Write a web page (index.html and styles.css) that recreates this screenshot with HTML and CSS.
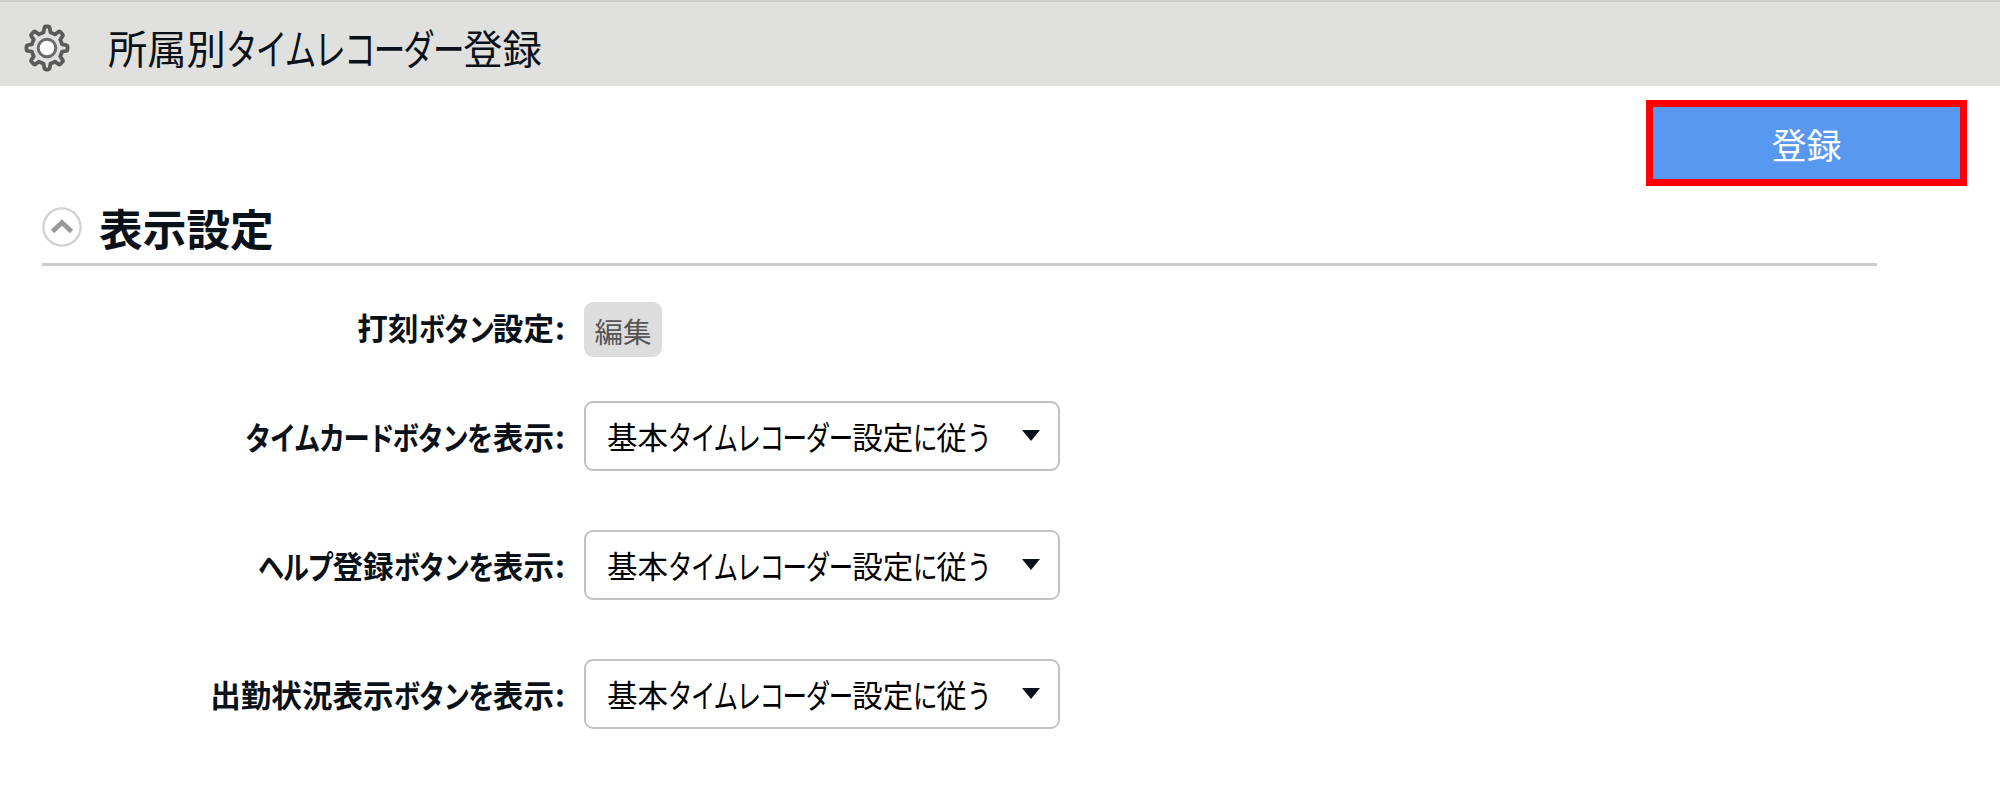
FILE: index.html
```html
<!DOCTYPE html>
<html lang="ja">
<head>
    <meta charset="UTF-8">
    <meta name="viewport" content="width=device-width, initial-scale=1.0">
    <title>所属別タイムレコーダー登録</title>
    <link rel="stylesheet" href="styles.css">
</head>
<body>
    <header class="page-header">
        <svg class="gear" viewBox="0 0 46 48" width="46" height="48">
            <path d="M19.5 8.5 L20.3 4 Q20.6 2.5 22 2.5 H24 Q25.4 2.5 25.7 4 L26.5 8.5 Q29 9.2 31 10.4 L34.2 8 Q35.4 7.1 36.5 8.2 L38.3 10 Q39.4 11.1 38.5 12.3 L36.2 15.6 Q37.4 17.8 38 20.3 L42 21 Q43.5 21.3 43.5 22.8 V25.2 Q43.5 26.7 42 27 L38 27.7 Q37.4 30.2 36.2 32.4 L38.5 35.7 Q39.4 36.9 38.3 38 L36.5 39.8 Q35.4 40.9 34.2 40 L31 37.6 Q29 38.8 26.5 39.5 L25.7 44 Q25.4 45.5 24 45.5 H22 Q20.6 45.5 20.3 44 L19.5 39.5 Q17 38.8 15 37.6 L11.8 40 Q10.6 40.9 9.5 39.8 L7.7 38 Q6.6 36.9 7.5 35.7 L9.8 32.4 Q8.6 30.2 8 27.7 L4 27 Q2.5 26.7 2.5 25.2 V22.8 Q2.5 21.3 4 21 L8 20.3 Q8.6 17.8 9.8 15.6 L7.5 12.3 Q6.6 11.1 7.7 10 L9.5 8.2 Q10.6 7.1 11.8 8 L15 10.4 Q17 9.2 19.5 8.5 Z" fill="none" stroke="#5a5a5a" stroke-width="3.8" stroke-linejoin="round"/>
            <circle cx="23" cy="24" r="8.8" fill="#fff" stroke="#6a6a6a" stroke-width="3"/>
        </svg>
        <h1>所属別<span class="kana k8">タイムレコーダー</span>登録</h1>
    </header>

    <div class="toolbar">
        <button class="submit">登録</button>
    </div>

    <section class="settings">
        <div class="section-title">
            <svg width="40" height="40" viewBox="0 0 40 40">
                <circle cx="20" cy="20" r="18.6" fill="#fff" stroke="#d2d2d2" stroke-width="2.4"/>
                <path d="M10.5 24.5 L20 15.5 L29.5 24.5" fill="none" stroke="#999" stroke-width="4.6"/>
            </svg>
            <h2>表示設定</h2>
        </div>

        <div class="row row-edit">
            <div class="label">打刻<span class="kana b3">ボタン</span>設定<span class="colon">:</span></div>
            <button class="edit">編集</button>
        </div>
        <div class="row">
            <div class="label"><span class="kana b10">タイムカードボタンを</span>表示<span class="colon">:</span></div>
            <div class="select">
                <span>基本<span class="kana k8">タイムレコーダー</span>設定<span class="kana k1">に</span>従<span class="kana k1">う</span></span>
                <i class="arrow"></i>
            </div>
        </div>
        <div class="row">
            <div class="label"><span class="kana b3">ヘルプ</span>登録<span class="kana b4">ボタンを</span>表示<span class="colon">:</span></div>
            <div class="select">
                <span>基本<span class="kana k8">タイムレコーダー</span>設定<span class="kana k1">に</span>従<span class="kana k1">う</span></span>
                <i class="arrow"></i>
            </div>
        </div>
        <div class="row">
            <div class="label">出勤状況表示<span class="kana b4">ボタンを</span>表示<span class="colon">:</span></div>
            <div class="select">
                <span>基本<span class="kana k8">タイムレコーダー</span>設定<span class="kana k1">に</span>従<span class="kana k1">う</span></span>
                <i class="arrow"></i>
            </div>
        </div>
    </section>
</body>
</html>
```

FILE: styles.css
```css
* { box-sizing: border-box; }
body { margin: 0; background: #fff; color: #0a1118; font-family: "Noto Sans CJK JP", sans-serif; white-space: nowrap; }
h1, h2 { margin: 0; }
button { font-family: inherit; padding: 0; border: none; }

/* condensed kana, width is given per number of characters */
.kana { display: inline-block; letter-spacing: -0.06em; transform-origin: left center; transform: scale(0.803, 1.07); }
.k1 { width: 0.755em; }
.k8 { width: 6.04em; }
.b3, .b4, .b10 { transform: scale(0.86, 1.05); }
.b3 { width: 2.43em; }
.b4 { width: 3.24em; }
.b10 { width: 8.1em; }

.page-header { display: flex; align-items: center; height: 86px; padding: 10px 0 0 24px; background: #e0e0de; border-top: 2px solid #ccc; }
.gear { display: block; margin-bottom: 3px; }
.page-header h1 { margin-left: 38px; padding-bottom: 4px; font-size: 39.3px; font-weight: 400; line-height: 60px; }

.toolbar { display: flex; justify-content: flex-end; padding: 14px 33px 0 0; }
.submit { width: 321px; height: 86px; padding-top: 1px; border: 7px solid #f00; background: #5898f0; color: #fff; font-size: 35px; line-height: 70px; }

.settings { padding: 19px 123px 0 42px; }
.section-title { display: flex; align-items: center; height: 61px; padding-bottom: 14px; border-bottom: 3px solid #ccc; }
.section-title h2 { margin-left: 17px; font-size: 43.7px; font-weight: 700; line-height: 44px; }

.row { display: flex; align-items: center; height: 70px; margin-bottom: 59px; }
.row-edit { align-items: flex-start; height: 55px; margin: 36px 0 44px; }
.label { width: 523px; margin-right: 19px; padding-bottom: 1px; text-align: right; font-size: 30.6px; font-weight: 700; line-height: 48px; }
.row-edit .label { line-height: 50px; }
.colon { padding-left: 1px; }
.edit { width: 78px; height: 55px; padding-top: 3px; border-radius: 9px; background: #ddd; color: #555; font-size: 28.5px; line-height: 52px; }
.select { display: flex; justify-content: space-between; align-items: center; width: 476px; height: 70px; padding: 0 18px 0 21px; border: 2px solid #c2c2c2; border-radius: 9px; color: #000; font-size: 30.5px; line-height: 50px; }
.arrow { width: 0; height: 0; margin-bottom: 1px; border: 9px solid transparent; border-top: 11px solid #0a1118; border-bottom: none; }
```
